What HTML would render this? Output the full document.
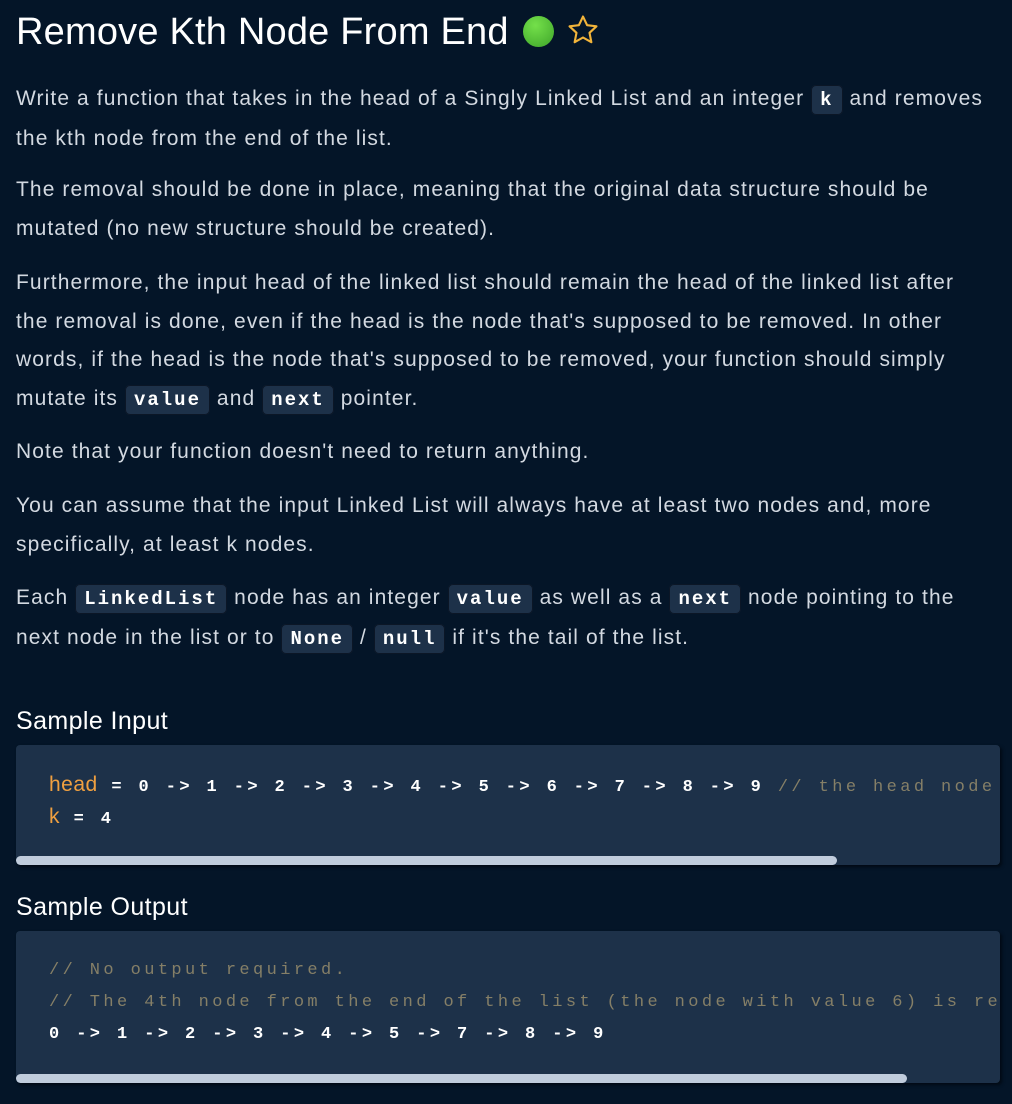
<!DOCTYPE html>
<html><head><meta charset="utf-8"><style>
html,body{margin:0;padding:0;background:#041528;}
body{width:1012px;height:1104px;overflow:hidden;position:relative;font-family:"Liberation Sans",sans-serif;color:#d3d9e1;}
h1{position:absolute;left:16px;top:8px;margin:0;font-size:38px;font-weight:normal;color:#fff;line-height:48px;white-space:nowrap;letter-spacing:0.2px}
.dot{display:inline-block;width:31px;height:31px;border-radius:50%;background:radial-gradient(circle at 40% 30%,#74e04a,#3ea52a);vertical-align:-3px;margin-left:14px}
.p{position:absolute;left:16px;width:1000px;font-size:21px;line-height:38.5px;white-space:nowrap;letter-spacing:1.1px}
code{font-family:"Liberation Mono",monospace;font-size:19px;font-weight:bold;color:#fff;background:#1d3149;border:1px solid #0b1626;border-radius:5px;padding:3px 8px;letter-spacing:2px}
h2{position:absolute;left:16px;margin:0;font-size:25px;font-weight:normal;color:#fff;line-height:30px;letter-spacing:0.4px}
.box{position:absolute;left:16px;width:984px;background:#1d3149;border-radius:4px;overflow:hidden;box-shadow:2px 2px 3px #020a14}
.ln{position:absolute;left:33px;font-family:"Liberation Mono",monospace;font-size:17px;letter-spacing:3.4px;color:#fff;white-space:nowrap;font-weight:bold;line-height:32px}
.o{color:#f0a040;font-family:"Liberation Sans",sans-serif;font-weight:normal;letter-spacing:0.5px;font-size:21px}
.c{color:#857f67;font-weight:normal}
.sb{position:absolute;left:0;height:9px;background:#c0ccdc;border-radius:5px}
</style></head><body>
<h1>Remove Kth Node From End<span class="dot"></span> <svg width="34" height="34" viewBox="0 0 24 24" style="vertical-align:-3px;margin-left:2px"><path d="M12 2.5l2.9 6.1 6.6.8-4.9 4.6 1.3 6.6L12 17.3l-5.9 3.3 1.3-6.6-4.9-4.6 6.6-.8z" fill="none" stroke="#f2b43a" stroke-width="1.5" stroke-linejoin="round"/></svg></h1>
<div class="p" style="top:80px">Write a function that takes in the head of a Singly Linked List and an integer <code>k</code> and removes<br>the kth node from the end of the list.</div>
<div class="p" style="top:171px">The removal should be done in place, meaning that the original data structure should be<br>mutated (no new structure should be created).</div>
<div class="p" style="top:264px">Furthermore, the input head of the linked list should remain the head of the linked list after<br>the removal is done, even if the head is the node that's supposed to be removed. In other<br>words, if the head is the node that's supposed to be removed, your function should simply<br>mutate its <code>value</code> and <code>next</code> pointer.</div>
<div class="p" style="top:433px">Note that your function doesn't need to return anything.</div>
<div class="p" style="top:487px">You can assume that the input Linked List will always have at least two nodes and, more<br>specifically, at least k nodes.</div>
<div class="p" style="top:579px">Each <code>LinkedList</code> node has an integer <code>value</code> as well as a <code>next</code> node pointing to the<br>next node in the list or to <code>None</code> / <code>null</code> if it's the tail of the list.</div>
<h2 style="top:706px">Sample Input</h2>
<div class="box" style="top:745px;height:120px">
<div class="ln" style="top:24px"><span class="o">head</span> = 0 -&gt; 1 -&gt; 2 -&gt; 3 -&gt; 4 -&gt; 5 -&gt; 6 -&gt; 7 -&gt; 8 -&gt; 9 <span class="c">// the head node</span></div>
<div class="ln" style="top:56px"><span class="o">k</span> = 4</div>
<div class="sb" style="top:111px;width:821px"></div>
</div>
<h2 style="top:892px">Sample Output</h2>
<div class="box" style="top:931px;height:152px">
<div class="ln" style="top:24px"><span class="c">// No output required.</span></div>
<div class="ln" style="top:56px"><span class="c">// The 4th node from the end of the list (the node with value 6) is removed.</span></div>
<div class="ln" style="top:88px">0 -&gt; 1 -&gt; 2 -&gt; 3 -&gt; 4 -&gt; 5 -&gt; 7 -&gt; 8 -&gt; 9</div>
<div class="sb" style="top:143px;width:891px"></div>
</div>
</body></html>
